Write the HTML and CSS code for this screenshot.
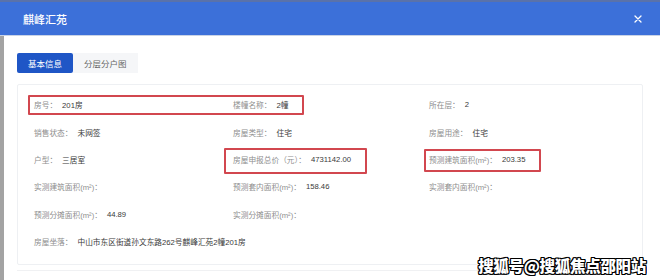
FILE: index.html
```html
<!DOCTYPE html>
<html lang="zh">
<head>
<meta charset="utf-8">
<title>麒峰汇苑</title>
<link rel="stylesheet" href="styles.css">
</head>
<body>
<div class="dialog">
  <header class="head">
    <span class="title">麒峰汇苑</span>
    <svg class="close" width="8" height="8" viewBox="0 0 8 8"><path d="M1 1L7 7M7 1L1 7" stroke="#fff" stroke-width="1.3" stroke-linecap="round"/></svg>
  </header>
  <div class="body">
    <div class="strip"></div>
    <main class="main">
      <div class="tabs">
        <span class="tab active">基本信息</span>
        <span class="tab">分层分户图</span>
      </div>
      <section class="card">
        <div class="grid">
          <div class="cell"><span class="k">房号：</span><span class="v">201房</span></div>
          <div class="cell"><span class="k">楼幢名称：</span><span class="v">2幢</span></div>
          <div class="cell"><span class="k">所在层：</span><span class="v">2</span></div>
          <div class="cell"><span class="k">销售状态：</span><span class="v">未网签</span></div>
          <div class="cell"><span class="k">房屋类型：</span><span class="v">住宅</span></div>
          <div class="cell"><span class="k">房屋用途：</span><span class="v">住宅</span></div>
          <div class="cell"><span class="k">户型：</span><span class="v">三居室</span></div>
          <div class="cell"><span class="k">房屋申报总价（元）：</span><span class="v">4731142.00</span></div>
          <div class="cell"><span class="k">预测建筑面积(m²)：</span><span class="v">203.35</span></div>
          <div class="cell"><span class="k">实测建筑面积(m²)：</span><span class="v"></span></div>
          <div class="cell"><span class="k">预测套内面积(m²)：</span><span class="v">158.46</span></div>
          <div class="cell"><span class="k">实测套内面积(m²)：</span><span class="v"></span></div>
          <div class="cell"><span class="k">预测分摊面积(m²)：</span><span class="v">44.89</span></div>
          <div class="cell"><span class="k">实测分摊面积(m²)：</span><span class="v"></span></div>
          <div class="cell"></div>
          <div class="cell wide"><span class="k">房屋坐落：</span><span class="v">中山市东区街道孙文东路262号麒峰汇苑2幢201房</span></div>
        </div>
        <div class="mark m1"></div>
        <div class="mark m2"></div>
        <div class="mark m3"></div>
      </section>
      <div class="foot"></div>
    </main>
  </div>
  <div class="watermark">搜狐号@搜狐焦点邵阳站</div>
</div>
</body>
</html>
```

FILE: styles.css
```css
* { box-sizing: border-box; }
html, body { margin: 0; padding: 0; }
body {
  width: 660px;
  height: 280px;
  overflow: hidden;
  background: #fff;
  font-family: "Liberation Sans", "Noto Sans CJK SC", sans-serif;
}
.dialog {
  position: relative;
  width: 660px;
  height: 280px;
  display: flex;
  flex-direction: column;
}
.head {
  height: 36px;
  flex: none;
  background: #3c70d9;
  border-top: 2px solid #5a72aa;
  border-bottom: 1px solid #c9d3e6;
  display: flex;
  align-items: center;
  justify-content: space-between;
  padding: 0 18px 0 23px;
}
.title {
  color: #fff;
  font-family: "Noto Sans CJK SC", sans-serif;
  font-size: 11px;
  font-weight: 500;
}
.close { display: block; }
.body {
  flex: 1;
  display: flex;
}
.strip {
  width: 4px;
  flex: none;
  background: #a3a3a3;
}
.main {
  flex: 1;
  padding: 17px 17px 0 13px;
}
.tabs {
  display: flex;
  height: 20px;
}
.tab {
  display: flex;
  align-items: center;
  padding: 0 11px;
  font-family: "Noto Sans CJK SC", sans-serif;
  font-size: 8.5px;
  color: #666;
  background: #f5f6f8;
}
.tab.active {
  background: #1f56c6;
  color: #fff;
  border-radius: 2px;
}
.card {
  position: relative;
  margin-top: 11px;
  border: 1px solid #eef0f3;
  border-radius: 2px;
  padding: 6px 16px 9px;
}
.grid {
  display: grid;
  grid-template-columns: 199px 196px 1fr;
  grid-auto-rows: 27.4px;
}
.cell {
  display: flex;
  align-items: center;
  gap: 5px;
  font-size: 7.7px;
  white-space: nowrap;
}
.cell.wide { grid-column: 1 / -1; }
.k { color: #8e8e8e; }
.v { color: #3a3a3a; }
.mark {
  position: absolute;
  border: 2px solid #d2474f;
  border-radius: 1px;
}
.m1 { left: 10px; top: 10px; width: 276px; height: 20px; }
.m2 { left: 206px; top: 63px; width: 143px; height: 26px; }
.m3 { left: 406px; top: 64px; width: 117px; height: 23px; }
.foot {
  margin-top: 5px;
  border-top: 1px solid #f0f1f3;
}
.watermark {
  position: absolute;
  right: 14px;
  bottom: 4px;
  font-family: "Noto Sans CJK SC", sans-serif;
  font-size: 15.5px;
  font-weight: 900;
  color: #fff;
  letter-spacing: -0.3px;
  text-shadow: 1px 1px 0 #000, -1px -1px 0 #000, 1px -1px 0 #000, -1px 1px 0 #000, 1px 0 0 #000, -1px 0 0 #000, 0 1px 0 #000, 0 -1px 0 #000;
}
```
